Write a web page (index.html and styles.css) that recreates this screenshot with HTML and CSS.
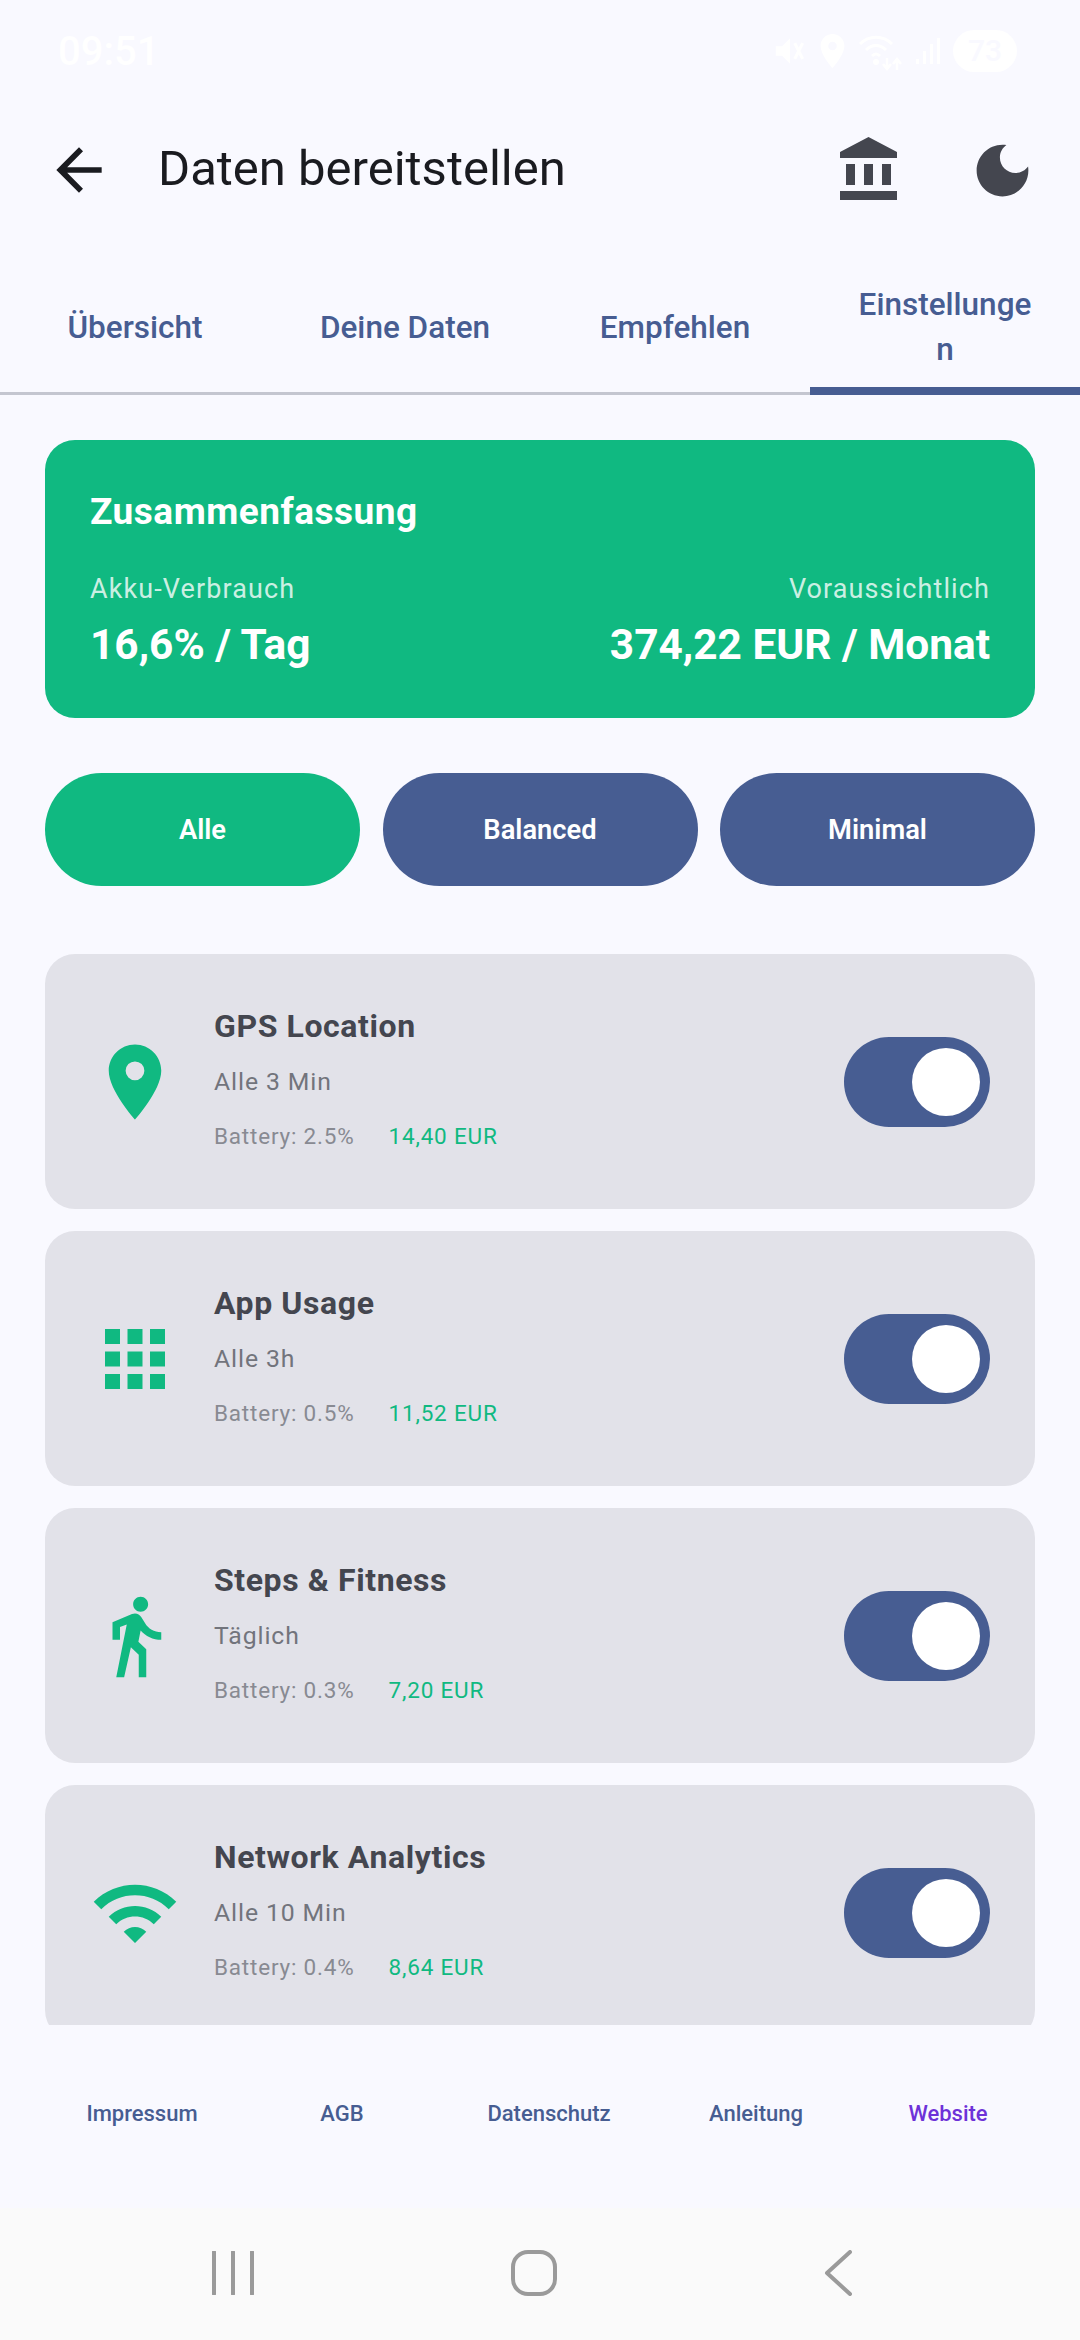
FILE: index.html
```html
<!DOCTYPE html>
<html lang="de">
<head>
	<meta charset="utf-8">
	<title>Daten bereitstellen</title>
	<link rel="stylesheet" href="styles.css">
</head>
<body>
	<div class="status">
		<span class="clock">09:51</span>
		<div class="status-icons">
			<svg class="st-mute" viewBox="0 0 24 24"><path d="M3 9v6h4l5 5V4L7 9H3z"/><path d="M15 7l5 10M20 7l-5 10" stroke="#fff" stroke-width="2"/></svg>
			<svg class="st-pin" viewBox="5 2 14 20"><path d="M12 2C8.13 2 5 5.13 5 9c0 5.25 7 13 7 13s7-7.75 7-13c0-3.87-3.13-7-7-7zm0 9.5a2.5 2.5 0 1 1 0-5 2.5 2.5 0 0 1 0 5z"/></svg>
			<svg class="st-wifi" viewBox="0 0 46 42"><path d="M1 14c9-9 23-9 32 0M7 20c6-6 14-6 20 0M13 26c3-3 5-3 8 0" fill="none" stroke="#fff" stroke-width="3"/><circle cx="17" cy="32" r="3"/><path d="M28 28v10M24 34l4 5 4-5M38 40V30M34 34l4-5 4 5" fill="none" stroke="#fff" stroke-width="2.5"/></svg>
			<svg class="st-signal" viewBox="0 0 26 28"><path d="M1 22h3v5H1zM8 14h3v13H8zM15 7h3v20h-3zM22 1h3v26h-3z"/></svg>
			<span class="st-battery">73</span>
		</div>
	</div>

	<header class="appbar">
		<svg class="back" viewBox="0 0 24 24"><path d="M20 11H7.83l5.59-5.59L12 4l-8 8 8 8 1.41-1.41L7.83 13H20v-2z"/></svg>
		<h1 class="page-title">Daten bereitstellen</h1>
		<svg class="bar-icon bank" viewBox="0 0 24 24"><path d="M4 10v7h3v-7H4zm6 0v7h3v-7h-3zM2 22h19v-3H2v3zm14-12v7h3v-7h-3zm-4.5-9L2 6v2h19V6l-9.5-5z"/></svg>
		<svg class="bar-icon moon" viewBox="0 0 24 24"><path d="M12 3c-4.97 0-9 4.03-9 9s4.03 9 9 9 9-4.03 9-9c0-.46-.04-.92-.1-1.36-.98 1.37-2.58 2.26-4.4 2.26-2.98 0-5.4-2.42-5.4-5.4 0-1.81.89-3.42 2.26-4.4-.44-.06-.9-.1-1.36-.1z"/></svg>
	</header>

	<nav class="tabs">
		<div class="tab">Übersicht</div>
		<div class="tab">Deine Daten</div>
		<div class="tab">Empfehlen</div>
		<div class="tab active">Einstellungen</div>
	</nav>

	<main class="content">
		<section class="summary">
			<h2 class="summary-title">Zusammenfassung</h2>
			<div class="summary-row">
				<div>
					<div class="summary-label">Akku-Verbrauch</div>
					<div class="summary-value">16,6% / Tag</div>
				</div>
				<div class="right">
					<div class="summary-label">Voraussichtlich</div>
					<div class="summary-value">374,22 EUR / Monat</div>
				</div>
			</div>
		</section>

		<div class="pills">
			<div class="pill on">Alle</div>
			<div class="pill">Balanced</div>
			<div class="pill">Minimal</div>
		</div>

		<div class="list">
			<div class="item">
				<svg class="item-icon" viewBox="0 0 24 24"><path d="M12 2C8.13 2 5 5.13 5 9c0 5.25 7 13 7 13s7-7.75 7-13c0-3.87-3.13-7-7-7zm0 9.5a2.5 2.5 0 1 1 0-5 2.5 2.5 0 0 1 0 5z"/></svg>
				<div class="item-text">
					<div class="item-name">GPS Location</div>
					<div class="item-freq">Alle 3 Min</div>
					<div class="item-meta"><span class="battery">Battery: 2.5%</span><span class="price">14,40 EUR</span></div>
				</div>
				<div class="toggle"><div class="thumb"></div></div>
			</div>
			<div class="item">
				<svg class="item-icon" viewBox="0 0 24 24"><path d="M4 8h4V4H4v4zm6 12h4v-4h-4v4zm-6 0h4v-4H4v4zm0-6h4v-4H4v4zm6 0h4v-4h-4v4zm6-10v4h4V4h-4zm-6 4h4V4h-4v4zm6 6h4v-4h-4v4zm0 6h4v-4h-4v4z"/></svg>
				<div class="item-text">
					<div class="item-name">App Usage</div>
					<div class="item-freq">Alle 3h</div>
					<div class="item-meta"><span class="battery">Battery: 0.5%</span><span class="price">11,52 EUR</span></div>
				</div>
				<div class="toggle"><div class="thumb"></div></div>
			</div>
			<div class="item">
				<svg class="item-icon" viewBox="0 0 24 24"><path d="M13.5 5.5c1.1 0 2-.9 2-2s-.9-2-2-2-2 .9-2 2 .9 2 2 2zM9.8 8.9L7 23h2.1l1.8-8 2.1 2v6h2v-7.5l-2.1-2 .6-3C14.8 12 16.8 13 19 13v-2c-1.9 0-3.5-1-4.3-2.4l-1-1.6c-.4-.6-1-1-1.7-1-.3 0-.5.1-.8.1L6 8.3V13h2V9.6l1.8-.7"/></svg>
				<div class="item-text">
					<div class="item-name">Steps &amp; Fitness</div>
					<div class="item-freq">Täglich</div>
					<div class="item-meta"><span class="battery">Battery: 0.3%</span><span class="price">7,20 EUR</span></div>
				</div>
				<div class="toggle"><div class="thumb"></div></div>
			</div>
			<div class="item">
				<svg class="item-icon" viewBox="0 0 24 24"><path d="M1 9l2 2c4.97-4.97 13.03-4.97 18 0l2-2C16.93 2.93 7.08 2.93 1 9zm8 8l3 3 3-3c-1.65-1.66-4.34-1.66-6 0zm-4-4l2 2c2.76-2.76 7.24-2.76 10 0l2-2C15.14 9.14 8.87 9.14 5 13z"/></svg>
				<div class="item-text">
					<div class="item-name">Network Analytics</div>
					<div class="item-freq">Alle 10 Min</div>
					<div class="item-meta"><span class="battery">Battery: 0.4%</span><span class="price">8,64 EUR</span></div>
				</div>
				<div class="toggle"><div class="thumb"></div></div>
			</div>
		</div>
	</main>

	<footer class="links">
		<a>Impressum</a>
		<a>AGB</a>
		<a>Datenschutz</a>
		<a>Anleitung</a>
		<a class="site">Website</a>
	</footer>

	<div class="navbar">
		<svg class="nav-recents" viewBox="0 0 42 44"><path d="M2 1v42M21 1v42M40 1v42"/></svg>
		<svg class="nav-home" viewBox="0 0 46 46"><rect x="2" y="2" width="42" height="42" rx="15"/></svg>
		<svg class="nav-back" viewBox="0 0 28 46"><path d="M26 2L3 23l23 21"/></svg>
	</div>
</body>
</html>
```

FILE: styles.css
```css
* {
	box-sizing: border-box;
}

body {
	margin: 0;
	width: 1080px;
	height: 2340px;
	overflow: hidden;
	background-color: #f9f9ff;
	font-family: Roboto, "Noto Sans", sans-serif;
	color: #1a1b20;
	display: flex;
	flex-direction: column;
}

.status {
	height: 102px;
	padding: 0 63px 0 58px;
	display: flex;
	align-items: center;
	justify-content: space-between;
	color: #fff;
}
.clock {
	font-size: 40px;
	font-weight: 500;
}
.status-icons {
	display: flex;
	align-items: center;
}
.status-icons svg {
	fill: #fff;
}
.st-mute { width: 38px; height: 38px; margin-right: 10px; }
.st-pin { width: 27px; height: 34px; margin-right: 13px; }
.st-wifi { width: 46px; height: 42px; margin-right: 10px; }
.st-signal { width: 26px; height: 28px; margin-right: 12px; }
.st-battery {
	width: 64px;
	height: 42px;
	border-radius: 21px;
	background-color: #fff;
	color: #f9f9ff;
	font-size: 30px;
	font-weight: 500;
	text-align: center;
	line-height: 42px;
}

.appbar {
	height: 136px;
	display: flex;
	align-items: center;
	padding: 0 43px 0 45px;
}
.back {
	width: 68px;
	height: 68px;
	fill: #1a1b20;
	flex: none;
}
.page-title {
	margin: 0 0 3px 45px;
	flex: 1;
	font-size: 49px;
	font-weight: 400;
}
.bar-icon {
	width: 72px;
	height: 72px;
	fill: #44464f;
	flex: none;
}
.bank { margin-right: 62px; }
.moon {
	width: 69px;
	height: 69px;
}

.tabs {
	margin-top: 8px;
	height: 149px;
	display: grid;
	grid-template-columns: repeat(4, 270px);
	border-bottom: 3px solid #c4c6d0;
}
.tab {
	display: flex;
	align-items: center;
	justify-content: center;
	padding: 13px 45px 0;
	text-align: center;
	font-size: 31.5px;
	font-weight: 500;
	line-height: 45px;
	color: #475d92;
	overflow-wrap: anywhere;
}
.tab.active {
	height: 149px;
	padding-top: 21px;
	border-bottom: 8px solid #475d92;
}

.content {
	padding: 45px 45px 0;
}

.summary {
	height: 278px;
	padding: 45px;
	border-radius: 30px;
	background-color: #10b981;
	color: #fff;
}
.summary-title {
	margin: 0;
	font-size: 37px;
	font-weight: 700;
	letter-spacing: 0.5px;
	line-height: 54px;
}
.summary-row {
	margin-top: 31px;
	display: flex;
	justify-content: space-between;
}
.right {
	text-align: right;
}
.summary-label {
	font-size: 27px;
	line-height: 39px;
	letter-spacing: 1.1px;
	color: rgba(255, 255, 255, 0.8);
}
.summary-value {
	margin-top: 12px;
	font-size: 42.4px;
	font-weight: 700;
	line-height: 48px;
}

.pills {
	margin-top: 55px;
	display: grid;
	grid-template-columns: repeat(3, 1fr);
	gap: 22.5px;
}
.pill {
	height: 113px;
	border-radius: 57px;
	background-color: #475d92;
	color: #fff;
	font-size: 27.3px;
	font-weight: 600;
	display: flex;
	align-items: center;
	justify-content: center;
}
.pill.on {
	background-color: #10b981;
}

.list {
	margin-top: 68px;
	height: 1071px;
	overflow: hidden;
	display: flex;
	flex-direction: column;
	gap: 22px;
}
.item {
	flex: none;
	height: 255px;
	padding: 0 45px;
	border-radius: 30px;
	background-color: #e2e2e9;
	display: flex;
	align-items: center;
}
.item-icon {
	width: 90px;
	height: 90px;
	fill: #10b981;
	flex: none;
}
.item-text {
	flex: 1;
	margin-left: 34px;
	padding-bottom: 8px;
}
.item-name {
	margin-top: -1px;
	font-size: 32px;
	font-weight: 700;
	letter-spacing: 0.6px;
	line-height: 48px;
	color: #44464f;
}
.item-freq {
	margin-top: 14px;
	font-size: 24.75px;
	line-height: 36px;
	letter-spacing: 0.9px;
	color: #72747c;
}
.item-meta {
	margin-top: 20px;
	font-size: 22.5px;
	line-height: 32px;
	letter-spacing: 0.8px;
	display: flex;
}
.battery {
	color: #888a92;
	margin-right: 34px;
}
.price {
	color: #10b981;
}
.toggle {
	flex: none;
	width: 146px;
	height: 90px;
	padding: 11px 10px;
	border-radius: 45px;
	background-color: #475d92;
	display: flex;
	justify-content: flex-end;
}
.thumb {
	width: 68px;
	height: 68px;
	border-radius: 50%;
	background-color: #fff;
}

.links {
	margin-top: 72px;
	padding-left: 42px;
	display: grid;
	grid-template-columns: 200px 200px 214px 200px 184px;
	text-align: center;
	font-size: 22px;
	font-weight: 500;
	line-height: 33px;
	color: #475d92;
}
.links .site {
	color: #6d32d8;
}

.navbar {
	margin-top: auto;
	height: 132px;
	background-color: #fafafa;
	display: flex;
	align-items: center;
	padding-bottom: 2px;
}
.navbar svg {
	fill: none;
	stroke: #9a9a9a;
	stroke-width: 4;
	stroke-linecap: round;
	stroke-linejoin: round;
	flex: none;
}
.nav-recents { width: 42px; height: 44px; margin-left: 212px; }
.nav-home { width: 46px; height: 46px; margin-left: 257px; }
.nav-back { width: 28px; height: 46px; margin-left: 267px; }
```
